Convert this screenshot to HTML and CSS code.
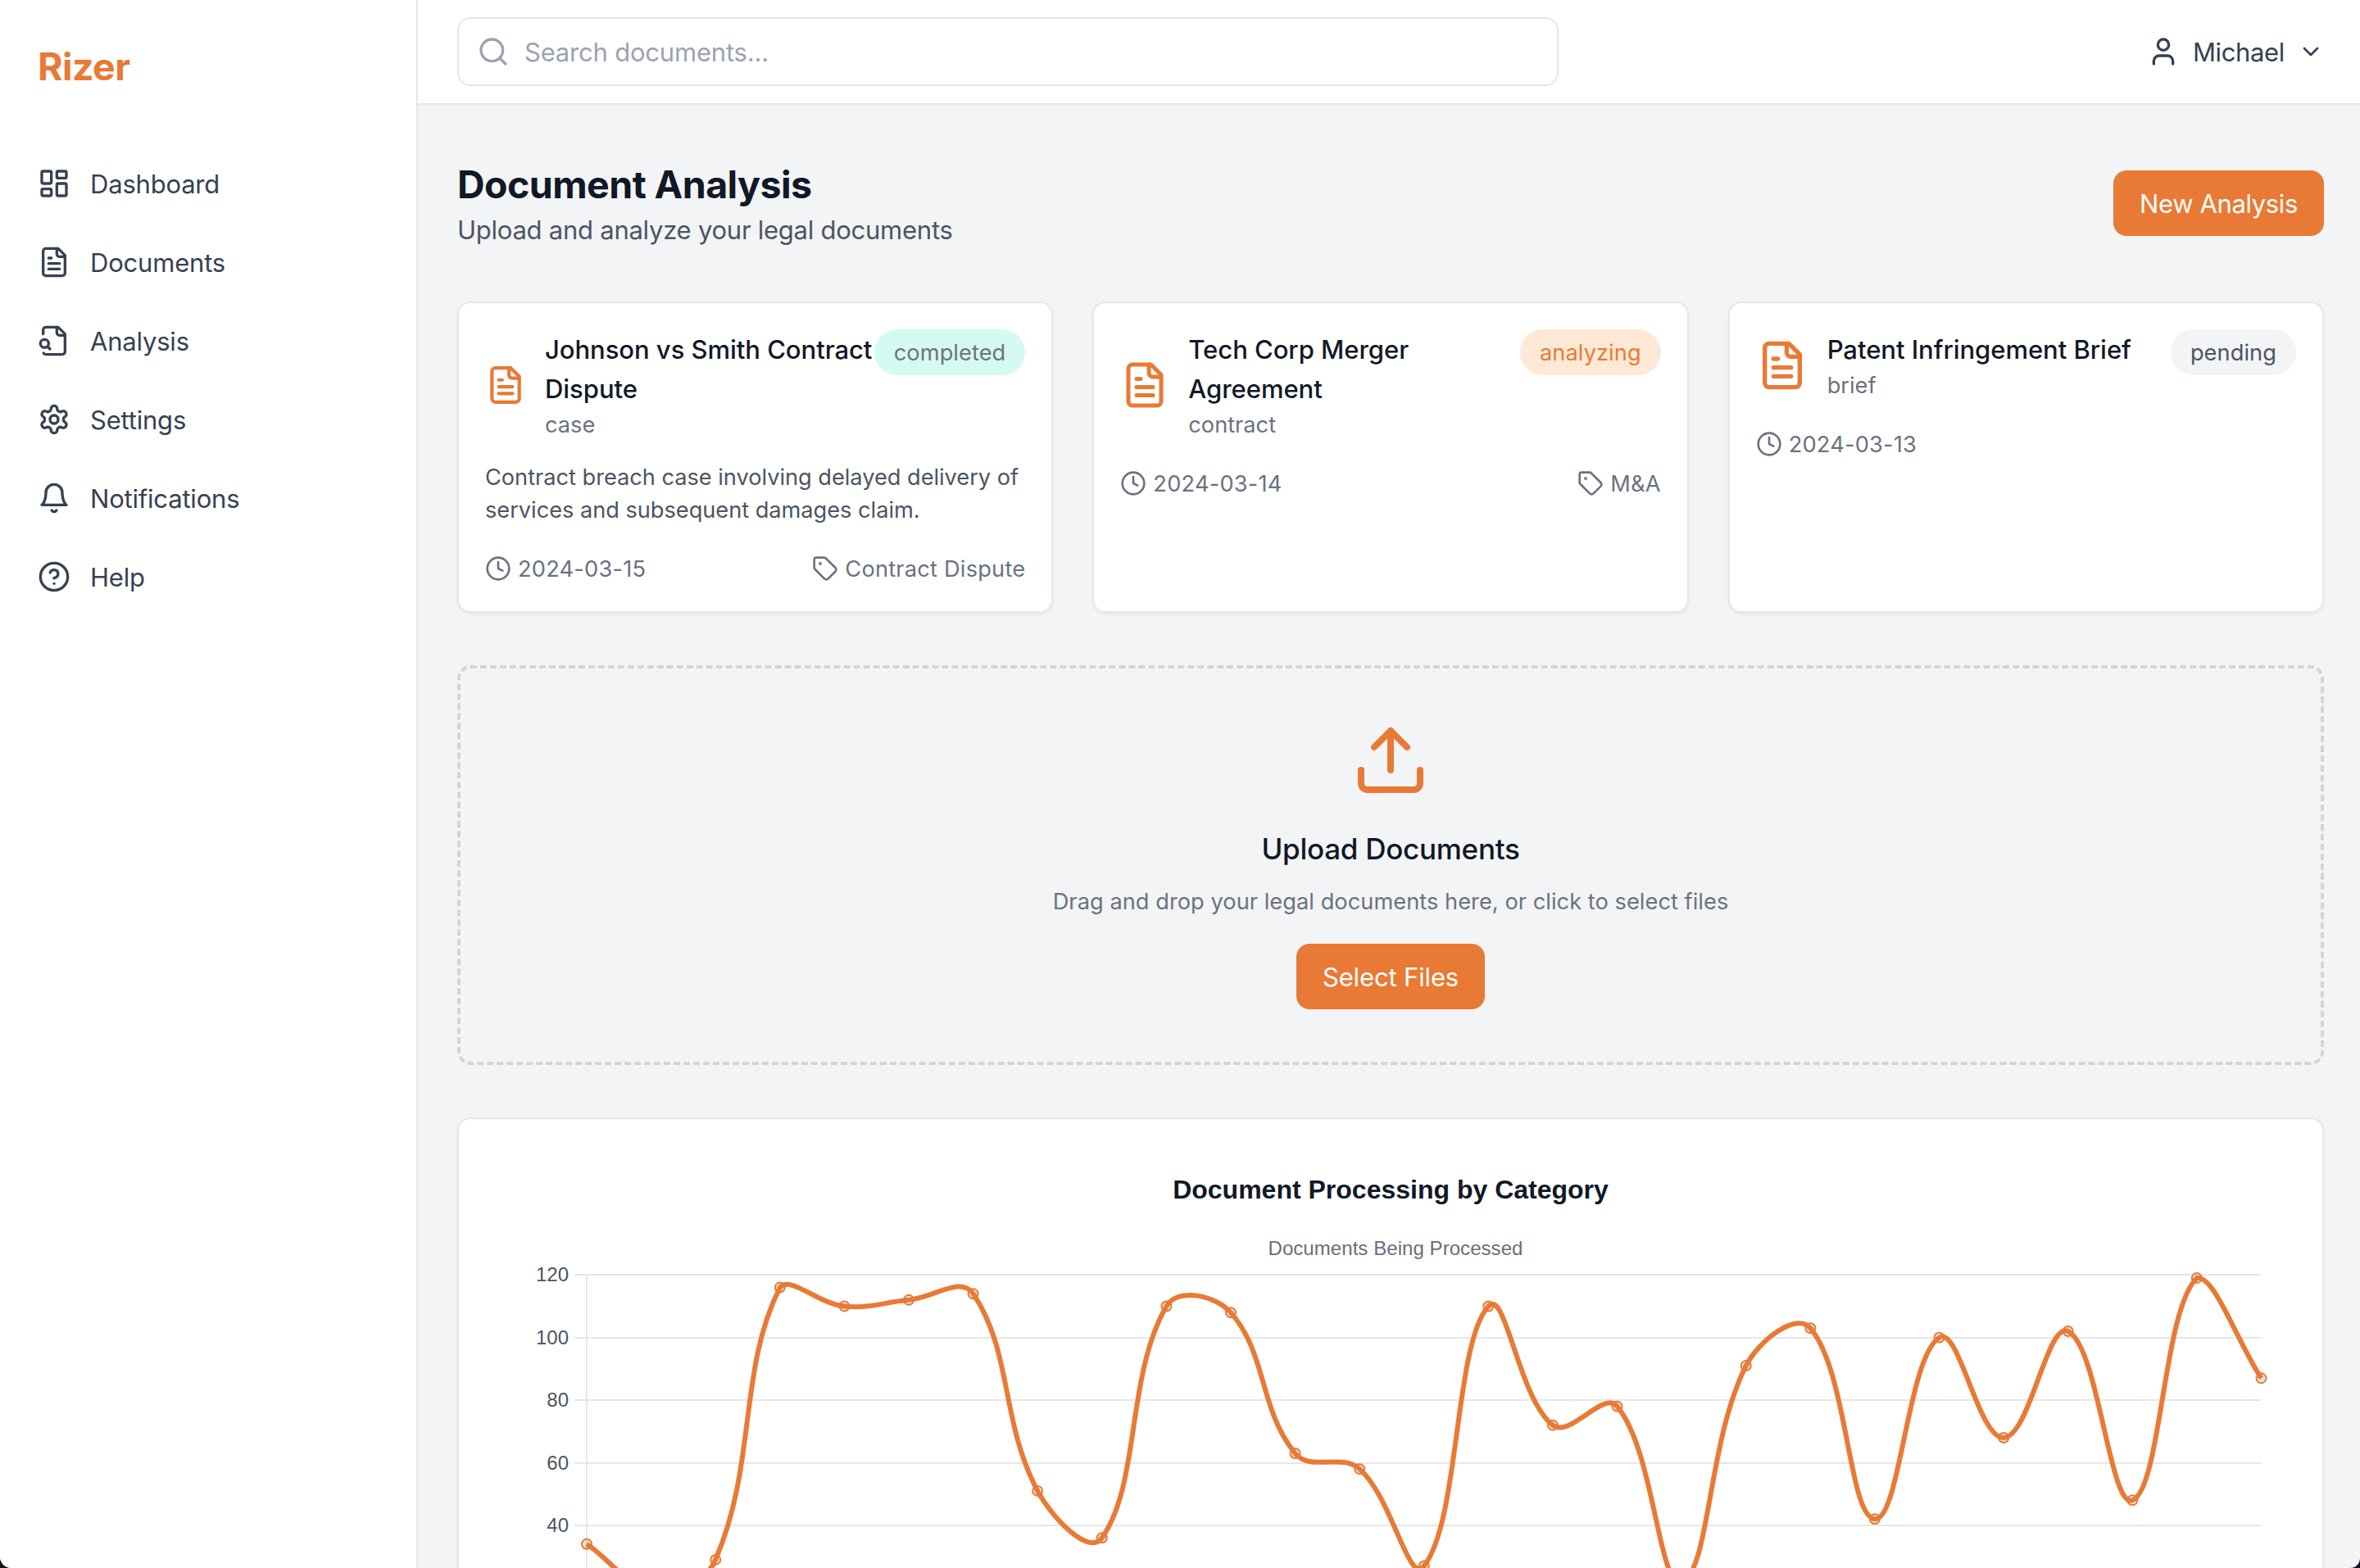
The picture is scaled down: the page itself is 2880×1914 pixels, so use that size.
FILE: index.html
```html
<!DOCTYPE html>
<html lang="en">
<head>
  <meta charset="UTF-8">
  <title>Rizer</title>
  <link rel="stylesheet" href="styles.css">
</head>
<body>
  <svg class="sprite">
    <symbol id="i-file" viewBox="0 0 24 24"><path d="M15 2H6a2 2 0 0 0-2 2v16a2 2 0 0 0 2 2h12a2 2 0 0 0 2-2V7Z"/><path d="M14 2v4a2 2 0 0 0 2 2h4"/><path d="M10 9H8"/><path d="M16 13H8"/><path d="M16 17H8"/></symbol>
    <symbol id="i-clock" viewBox="0 0 24 24"><circle cx="12" cy="12" r="10"/><path d="M12 6v6l4 2"/></symbol>
    <symbol id="i-tag" viewBox="0 0 24 24"><path d="M12.586 2.586A2 2 0 0 0 11.172 2H4a2 2 0 0 0-2 2v7.172a2 2 0 0 0 .586 1.414l8.704 8.704a2.426 2.426 0 0 0 3.42 0l6.58-6.58a2.426 2.426 0 0 0 0-3.42z"/><circle cx="7.5" cy="7.5" r=".5" fill="currentColor"/></symbol>
  </svg>

  <div class="app">
    <aside class="sidebar">
      <div class="logo">Rizer</div>
      <nav>
        <a class="nav-item">
          <svg class="icon" viewBox="0 0 24 24"><rect width="7" height="9" x="3" y="3" rx="1"/><rect width="7" height="5" x="14" y="3" rx="1"/><rect width="7" height="9" x="14" y="12" rx="1"/><rect width="7" height="5" x="3" y="16" rx="1"/></svg>
          <span>Dashboard</span>
        </a>
        <a class="nav-item">
          <svg class="icon"><use href="#i-file"/></svg>
          <span>Documents</span>
        </a>
        <a class="nav-item">
          <svg class="icon" viewBox="0 0 24 24"><path d="M14 2v4a2 2 0 0 0 2 2h4"/><path d="M4.268 21a2 2 0 0 0 1.727 1H18a2 2 0 0 0 2-2V7l-5-5H6a2 2 0 0 0-2 2v3"/><path d="m9 18-1.500-1.500"/><circle cx="5" cy="14" r="3"/></svg>
          <span>Analysis</span>
        </a>
        <a class="nav-item">
          <svg class="icon" viewBox="0 0 24 24"><path d="M12.220 2h-.44a2 2 0 0 0-2 2v.18a2 2 0 0 1-1 1.730l-.43.25a2 2 0 0 1-2 0l-.15-.08a2 2 0 0 0-2.730.730l-.22.38a2 2 0 0 0 .73 2.730l.15.1a2 2 0 0 1 1 1.720v.51a2 2 0 0 1-1 1.740l-.15.09a2 2 0 0 0-.73 2.730l.22.38a2 2 0 0 0 2.730.730l.15-.08a2 2 0 0 1 2 0l.43.25a2 2 0 0 1 1 1.730V20a2 2 0 0 0 2 2h.44a2 2 0 0 0 2-2v-.18a2 2 0 0 1 1-1.730l.43-.25a2 2 0 0 1 2 0l.15.08a2 2 0 0 0 2.730-.73l.22-.39a2 2 0 0 0-.73-2.730l-.15-.08a2 2 0 0 1-1-1.740v-.5a2 2 0 0 1 1-1.740l.15-.09a2 2 0 0 0 .73-2.730l-.22-.38a2 2 0 0 0-2.730-.73l-.15.08a2 2 0 0 1-2 0l-.43-.25a2 2 0 0 1-1-1.730V4a2 2 0 0 0-2-2z"/><circle cx="12" cy="12" r="3"/></svg>
          <span>Settings</span>
        </a>
        <a class="nav-item">
          <svg class="icon" viewBox="0 0 24 24"><path d="M6 8a6 6 0 0 1 12 0c0 7 3 9 3 9H3s3-2 3-9"/><path d="M10.300 21a1.940 1.940 0 0 0 3.400 0"/></svg>
          <span>Notifications</span>
        </a>
        <a class="nav-item">
          <svg class="icon" viewBox="0 0 24 24"><circle cx="12" cy="12" r="10"/><path d="M9.090 9a3 3 0 0 1 5.830 1c0 2-3 3-3 3"/><path d="M12 17h.01"/></svg>
          <span>Help</span>
        </a>
      </nav>
    </aside>

    <div class="content">
      <header class="topbar">
        <div class="search">
          <svg class="icon" viewBox="0 0 24 24"><circle cx="11" cy="11" r="8"/><path d="m21 21-4.300-4.300"/></svg>
          <span>Search documents...</span>
        </div>
        <div class="user">
          <svg class="icon" viewBox="0 0 24 24"><path d="M19 21v-2a4 4 0 0 0-4-4H9a4 4 0 0 0-4 4v2"/><circle cx="12" cy="7" r="4"/></svg>
          <span>Michael</span>
          <svg class="icon icon-sm" viewBox="0 0 24 24"><path d="m6 9 6 6 6-6"/></svg>
        </div>
      </header>

      <main>
        <div class="page-head">
          <div>
            <h1>Document Analysis</h1>
            <p>Upload and analyze your legal documents</p>
          </div>
          <button class="btn btn-new">New Analysis</button>
        </div>

        <div class="cards">
          <div class="card">
            <div class="card-head">
              <svg class="doc-icon doc-sm"><use href="#i-file"/></svg>
              <div>
                <h3>Johnson vs Smith Contract<br>Dispute</h3>
                <p>case</p>
              </div>
              <span class="badge completed">completed</span>
            </div>
            <p class="desc">Contract breach case involving delayed delivery of<br>services and subsequent damages claim.</p>
            <div class="meta">
              <div><svg class="icon icon-sm"><use href="#i-clock"/></svg><span>2024-03-15</span></div>
              <div><svg class="icon icon-sm"><use href="#i-tag"/></svg><span>Contract Dispute</span></div>
            </div>
          </div>

          <div class="card">
            <div class="card-head">
              <svg class="doc-icon doc-md"><use href="#i-file"/></svg>
              <div>
                <h3>Tech Corp Merger<br>Agreement</h3>
                <p>contract</p>
              </div>
              <span class="badge analyzing">analyzing</span>
            </div>
            <div class="meta">
              <div><svg class="icon icon-sm"><use href="#i-clock"/></svg><span>2024-03-14</span></div>
              <div><svg class="icon icon-sm"><use href="#i-tag"/></svg><span>M&amp;A</span></div>
            </div>
          </div>

          <div class="card">
            <div class="card-head">
              <svg class="doc-icon"><use href="#i-file"/></svg>
              <div>
                <h3>Patent Infringement Brief</h3>
                <p>brief</p>
              </div>
              <span class="badge pending">pending</span>
            </div>
            <div class="meta">
              <div><svg class="icon icon-sm"><use href="#i-clock"/></svg><span>2024-03-13</span></div>
            </div>
          </div>
        </div>

        <div class="upload">
          <svg class="upload-icon" viewBox="0 0 24 24"><path d="M21 15v4a2 2 0 0 1-2 2H5a2 2 0 0 1-2-2v-4"/><path d="m17 8-5-5-5 5"/><path d="M12 3v12"/></svg>
          <h2>Upload Documents</h2>
          <p>Drag and drop your legal documents here, or click to select files</p>
          <button class="btn">Select Files</button>
        </div>

        <div class="chart-card">
          <svg id="chart" width="2274" height="700"></svg>
        </div>
      </main>
    </div>
  </div>

  <script src="chart.js"></script>
</body>
</html>
```
FILE: styles.css
```css
* { margin: 0; padding: 0; box-sizing: border-box; }
html { background: #0d1520; }
body {
  height: 1914px;
  overflow: hidden;
  font-family: Inter, "Liberation Sans", sans-serif;
  font-size: 31px;
  line-height: 48px;
  letter-spacing: -0.2px;
  color: #374151;
}
.sprite { display: none; }
.app {
  display: flex;
  height: 1914px;
  overflow: hidden;
  background: #f3f4f6;
  border-radius: 0 0 12px 14px;
}

.icon {
  width: 40px;
  height: 40px;
  flex: none;
}
.icon-sm { width: 32px; height: 32px; }
.icon, .doc-icon, .upload-icon {
  fill: none;
  stroke: currentColor;
  stroke-width: 2;
  stroke-linecap: round;
  stroke-linejoin: round;
}

/* sidebar */
.sidebar {
  width: 510px;
  flex: none;
  background: #fff;
  border-right: 2px solid #e5e7eb;
  padding: 49px 46px;
}
.logo {
  font-size: 46.500px;
  line-height: 64px;
  font-weight: 700;
  letter-spacing: -0.6px;
  color: #e87a35;
  margin-bottom: 63px;
}
.nav-item {
  display: flex;
  align-items: center;
  gap: 24px;
  height: 96px;
}
.nav-item span, .search span, .user span, .meta span { padding-top: 2px; }

/* top bar */
.content { flex: 1; min-width: 0; }
.topbar {
  height: 128px;
  background: #fff;
  border-bottom: 2px solid #e5e7eb;
  padding: 0 44px 0 48px;
  display: flex;
  align-items: center;
  justify-content: space-between;
}
.search {
  width: 1344px;
  height: 84px;
  border: 2px solid #e5e7eb;
  border-radius: 16px;
  padding: 0 22px;
  display: flex;
  align-items: center;
  gap: 18px;
  color: #9ca3af;
  letter-spacing: -0.2px;
}
.user { display: flex; align-items: center; gap: 16px; letter-spacing: -0.35px; }

main { padding: 64px 44px 0 48px; }
.page-head {
  display: flex;
  align-items: center;
  justify-content: space-between;
  height: 112px;
  margin-bottom: 64px;
}
.page-head > div { padding-top: 2px; }
h1 {
  font-size: 46.500px;
  line-height: 64px;
  font-weight: 700;
  letter-spacing: -0.55px;
  color: #111827;
}
.page-head p { color: #4b5563; letter-spacing: -0.25px; }
.btn {
  display: block;
  height: 80px;
  padding: 2px 32px 0;
  border: none;
  border-radius: 16px;
  background: #e87a35;
  color: #fff;
  font: inherit;
  letter-spacing: -0.15px;
}
.btn-new { letter-spacing: -0.37px; }

/* document cards */
.cards {
  display: grid;
  grid-template-columns: repeat(3, 1fr);
  gap: 48px;
  margin-bottom: 64px;
}
.card, .chart-card {
  background: #fff;
  border: 2px solid #e5e7eb;
  border-radius: 16px;
  box-shadow: 0 2px 4px rgba(0, 0, 0, 0.05);
}
.card {
  height: 380px;
  padding: 32px;
  font-size: 27.200px;
  line-height: 40px;
  letter-spacing: 0;
  color: #6b7280;
}
.card-head { display: flex; align-items: center; white-space: nowrap; }
.card-head > div { padding-top: 1px; }
.doc-icon { width: 64px; height: 64px; flex: none; margin: 0 23px 1px 0; color: #e87a35; }
.doc-md { width: 60px; }
.doc-sm { width: 50px; }
h3 {
  font-size: 31px;
  line-height: 48px;
  font-weight: 500;
  letter-spacing: -0.04px;
  color: #111827;
}
.badge {
  align-self: flex-start;
  margin-left: auto;
  padding: 9px 24px 7px;
  border-radius: 28px;
  letter-spacing: 0.08px;
}
.completed { background: #d5faf1; color: #6b7675; }
.analyzing { background: #fde9d5; color: #e87a35; }
.pending { background: #f3f4f6; color: #4b5563; }
.desc {
  margin-top: 24px;
  color: #4b5563;
  white-space: nowrap;
  letter-spacing: -0.02px;
}
.meta { display: flex; justify-content: space-between; height: 40px; margin-top: 31px; letter-spacing: 0.22px; }
.meta div { display: flex; align-items: center; gap: 8px; }

/* upload area */
.upload {
  height: 488px;
  border: 4px dashed #d1d5db;
  border-radius: 16px;
  padding-top: 64px;
  display: flex;
  flex-direction: column;
  align-items: center;
  margin-bottom: 64px;
}
.upload-icon { width: 96px; height: 96px; color: #e87a35; }
h2 {
  font-size: 35px;
  line-height: 56px;
  font-weight: 500;
  letter-spacing: -0.27px;
  color: #111827;
  margin: 32px 0 17px;
}
.upload p {
  font-size: 27.200px;
  line-height: 40px;
  letter-spacing: 0.05px;
  color: #6b7280;
  margin-bottom: 31px;
}

/* chart */
.chart-card { height: 800px; }
#chart {
  display: block;
  font-family: "Liberation Sans", Arial, sans-serif;
  font-size: 24px;
  letter-spacing: 0;
}
#chart text { fill: #4b5563; }
#chart .title { font-size: 32px; font-weight: 700; fill: #111827; }
#chart .legend { letter-spacing: 0.06px; fill: #666f7a; }
.grid { stroke: #e5e7eb; stroke-width: 2; }
.line { fill: none; stroke: #e87a35; stroke-width: 6; }
.point { fill: rgba(0, 0, 0, 0.1); stroke: #e87a35; stroke-width: 2; }
```
FILE: chart.js
```js
const data = [34, 20, 29, 116, 110, 112, 114, 51, 36, 110, 108, 63, 58, 27,
  110, 72, 78, 22, 91, 103, 42, 100, 68, 102, 48, 119, 87];
const left = 156, right = 2199.5, top0 = 190.3, unit = 3.82;
const tension = 0.4;

const x = i => left + i * (right - left) / (data.length - 1);
const y = v => top0 + (120 - v) * unit;

function drawChart() {
  let svg = `<text class="title" x="1137" y="97" text-anchor="middle">Document Processing by Category</text>
    <text class="legend" x="1143" y="166" text-anchor="middle">Documents Being Processed</text>`;

  for (let v = 120; v >= 40; v -= 20) {
    const gy = Math.round(y(v));
    svg += `<path class="grid" d="M${left - 15} ${gy}H${right}"/>
      <text x="${left - 22}" y="${gy + 8}" text-anchor="end">${v}</text>`;
  }
  svg += `<path class="grid" d="M${left} ${top0}V${y(0)}"/>`;

  // control points for the smoothed line
  const pts = data.map((v, i) => ({ x: x(i), y: y(v) }));
  const cps = pts.map((p, i) => {
    const a = pts[i - 1] || p, b = pts[i + 1] || p;
    const d1 = Math.hypot(p.x - a.x, p.y - a.y);
    const d2 = Math.hypot(b.x - p.x, b.y - p.y);
    const f1 = tension * d1 / (d1 + d2), f2 = tension * d2 / (d1 + d2);
    const clamp = n => Math.max(top0, Math.min(y(0), n));
    return {
      px: p.x - f1 * (b.x - a.x), py: clamp(p.y - f1 * (b.y - a.y)),
      nx: p.x + f2 * (b.x - a.x), ny: clamp(p.y + f2 * (b.y - a.y))
    };
  });

  pts.forEach(p => svg += `<circle class="point" cx="${p.x}" cy="${p.y}" r="6"/>`);
  let d = `M${pts[0].x} ${pts[0].y}`;
  for (let i = 1; i < pts.length; i++) {
    d += `C${cps[i - 1].nx} ${cps[i - 1].ny} ${cps[i].px} ${cps[i].py} ${pts[i].x} ${pts[i].y}`;
  }
  svg += `<path class="line" d="${d}"/>`;
  document.getElementById('chart').innerHTML = svg;
}

drawChart();
```
